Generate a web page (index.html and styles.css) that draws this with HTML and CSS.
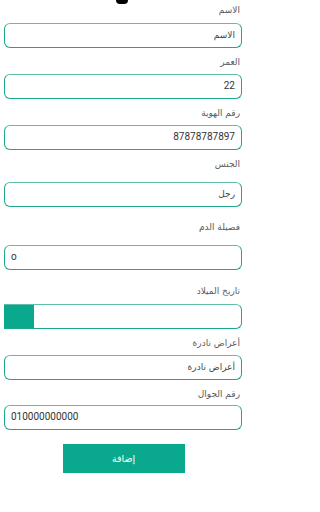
FILE: index.html
```html
<!DOCTYPE html>
<html lang="ar">
<head>
<meta charset="utf-8">
<link rel="stylesheet" href="styles.css">
</head>
<body>
<div class="page">
  <div class="avatar"></div>
  <div class="field first">
    <div class="label">الاسم</div>
    <div class="box ar">الاسم</div>
  </div>
  <div class="field">
    <div class="label">العمر</div>
    <div class="box">22</div>
  </div>
  <div class="field">
    <div class="label">رقم الهوية</div>
    <div class="box">87878787897</div>
  </div>
  <div class="field">
    <div class="label far">الجنس</div>
    <div class="box ar">رجل</div>
  </div>
  <div class="field wide">
    <div class="label far">فصيلة الدم</div>
    <div class="box ltr">o</div>
  </div>
  <div class="field wide dob">
    <div class="label">تاريخ الميلاد</div>
    <div class="box date"><div class="date-fill"></div></div>
  </div>
  <div class="field">
    <div class="label">أعراض نادرة</div>
    <div class="box ar">أعراض نادرة</div>
  </div>
  <div class="field">
    <div class="label near">رقم الجوال</div>
    <div class="box ltr">010000000000</div>
  </div>
  <div class="actions">
    <div class="btn">إضافة</div>
  </div>
</div>
</body>
</html>
```
FILE: styles.css
```css
html, body {
  margin: 0;
  padding: 0;
  background: #ffffff;
}
.page {
  width: 245px;
  box-sizing: border-box;
  padding: 0 3px 0 4px;
  font-family: Roboto, "DejaVu Sans", sans-serif;
  direction: rtl;
}
.avatar {
  width: 12px;
  height: 4px;
  margin: 0 auto;
  background: #000;
  border-radius: 0 0 6px 6px;
  position: relative;
  left: -1px;
}
.field {
  margin-top: 8px;
}
.field.first {
  margin-top: 0;
}
.field.first .label {
  margin-bottom: 7px;
}
.field.wide {
  margin-top: 14px;
}
.field.dob {
  margin-top: 15px;
}
.field.dob .label {
  margin-bottom: 7px;
}
.label {
  font-family: "DejaVu Sans", sans-serif;
  font-size: 9px;
  line-height: 12px;
  height: 12px;
  color: #5a5a5a;
  padding-right: 2px;
  margin-bottom: 6px;
}
.label.far {
  margin-bottom: 12px;
}
.label.near {
  margin-bottom: 5px;
}
.box {
  height: 25px;
  box-sizing: border-box;
  border: 1.5px solid #1ca88b;
  border-top-color: #5fbfa6;
  border-radius: 6px;
  font-size: 10px;
  line-height: 22px;
  color: #333;
  padding: 0 6px 0 6px;
  white-space: nowrap;
  overflow: hidden;
}
.box.ar {
  font-family: "DejaVu Sans", sans-serif;
  font-size: 9px;
  color: #444;
}
.box.ltr {
  direction: ltr;
  text-align: left;
}
.box.date {
  border-radius: 0 6px 6px 0;
  padding: 0;
  border-left: none;
  display: flex;
  direction: ltr;
}
.date-fill {
  width: 30px;
  height: 100%;
  background: #0aa88c;
}
.actions {
  display: flex;
  justify-content: center;
  margin-top: 14px;
  direction: ltr;
}
.btn {
  width: 122px;
  height: 29px;
  margin-left: 1px;
  background: #0aa88c;
  color: #fff;
  font-size: 9.5px;
  line-height: 29px;
  text-align: center;
  font-family: "DejaVu Sans", sans-serif;
}
```
